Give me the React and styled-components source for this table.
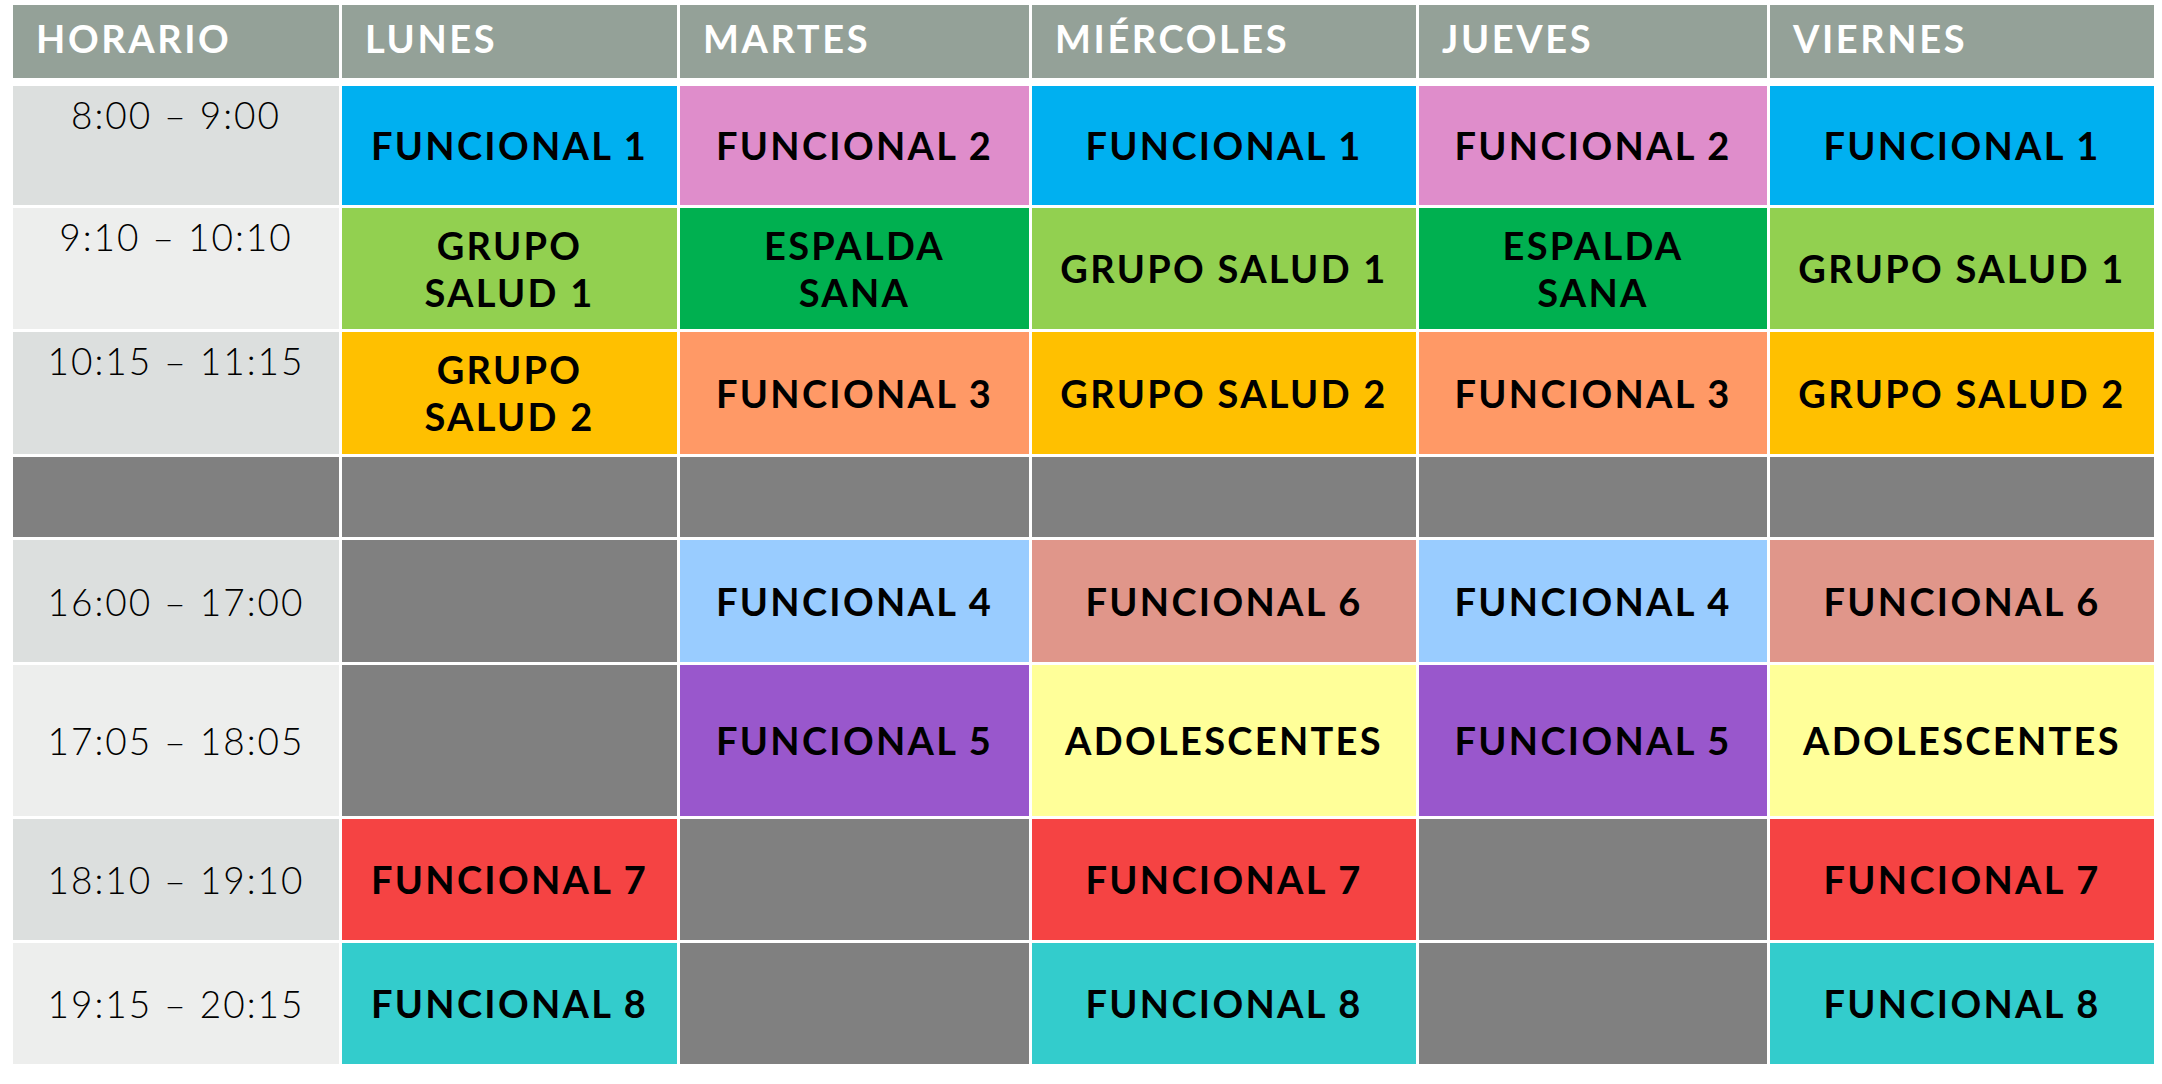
import React from 'react';
import styled, { createGlobalStyle } from 'styled-components';

const GlobalStyle = createGlobalStyle`
  html, body {
    margin: 0;
    padding: 0;
    background: #ffffff;
  }
`;

const COLUMNS = '326px 335px 349px 384px 348px 384px';

const Page = styled.div`
  padding: 5px 0 0 13px;
  font-family: Lato, "Open Sans", sans-serif;
`;

const HeaderRow = styled.div`
  display: grid;
  grid-template-columns: ${COLUMNS};
  column-gap: 3px;
  height: 73px;
  margin-bottom: 8px;
`;

const HeaderCell = styled.div`
  background: #94a198;
  color: #ffffff;
  font-weight: 700;
  font-size: 38px;
  letter-spacing: 2.6px;
  display: flex;
  align-items: center;
  padding: 0 0 7px 23px;
`;

const Body = styled.div`
  display: grid;
  grid-template-columns: ${COLUMNS};
  grid-template-rows: 119px 121px 122px 80px 122px 151px 121px 121px;
  column-gap: 3px;
  row-gap: 3px;
`;

const TimeCell = styled.div`
  background: ${p => (p.$shade ? '#dcdfde' : '#edeeed')};
  color: #000000;
  font-size: 37px;
  font-weight: 300;
  letter-spacing: 2px;
  display: flex;
  justify-content: center;
  align-items: ${p => (p.$top ? 'flex-start' : 'center')};
  padding-top: ${p => (p.$top ? '6px' : '0')};
`;

const ClassCell = styled.div`
  background: ${p => p.$bg};
  color: #000000;
  font-weight: 700;
  font-size: 38px;
  letter-spacing: 2.3px;
  line-height: 47px;
  text-align: center;
  white-space: pre-line;
  display: flex;
  align-items: center;
  justify-content: center;
`;

const Empty = styled.div`
  background: #808080;
`;

const C = {
  f1: '#00b0f0',
  f2: '#df8dcb',
  s1: '#92d050',
  es: '#00b050',
  s2: '#ffc000',
  f3: '#ff9966',
  f4: '#99ccff',
  f6: '#e0968a',
  f5: '#9957cc',
  ad: '#ffff99',
  f7: '#f54343',
  f8: '#33cccc',
};

const days = ['LUNES', 'MARTES', 'MIÉRCOLES', 'JUEVES', 'VIERNES'];

const rows = [
  { time: '8:00 – 9:00', shade: true, top: true, cells: [
    ['FUNCIONAL 1', C.f1], ['FUNCIONAL 2', C.f2], ['FUNCIONAL 1', C.f1], ['FUNCIONAL 2', C.f2], ['FUNCIONAL 1', C.f1]] },
  { time: '9:10 – 10:10', shade: false, top: true, cells: [
    ['GRUPO\nSALUD 1', C.s1], ['ESPALDA\nSANA', C.es], ['GRUPO SALUD 1', C.s1], ['ESPALDA\nSANA', C.es], ['GRUPO SALUD 1', C.s1]] },
  { time: '10:15 – 11:15', shade: true, top: true, cells: [
    ['GRUPO\nSALUD 2', C.s2], ['FUNCIONAL 3', C.f3], ['GRUPO SALUD 2', C.s2], ['FUNCIONAL 3', C.f3], ['GRUPO SALUD 2', C.s2]] },
  { time: null, cells: [null, null, null, null, null] },
  { time: '16:00 – 17:00', shade: true, cells: [
    null, ['FUNCIONAL 4', C.f4], ['FUNCIONAL 6', C.f6], ['FUNCIONAL 4', C.f4], ['FUNCIONAL 6', C.f6]] },
  { time: '17:05 – 18:05', shade: false, cells: [
    null, ['FUNCIONAL 5', C.f5], ['ADOLESCENTES', C.ad], ['FUNCIONAL 5', C.f5], ['ADOLESCENTES', C.ad]] },
  { time: '18:10 – 19:10', shade: true, cells: [
    ['FUNCIONAL 7', C.f7], null, ['FUNCIONAL 7', C.f7], null, ['FUNCIONAL 7', C.f7]] },
  { time: '19:15 – 20:15', shade: false, cells: [
    ['FUNCIONAL 8', C.f8], null, ['FUNCIONAL 8', C.f8], null, ['FUNCIONAL 8', C.f8]] },
];

export default function App() {
  return (
    <Page>
      <GlobalStyle />
      <HeaderRow>
        <HeaderCell>HORARIO</HeaderCell>
        {days.map(d => <HeaderCell key={d}>{d}</HeaderCell>)}
      </HeaderRow>
      <Body>
        {rows.map((r, i) => (
          <React.Fragment key={i}>
            {r.time
              ? <TimeCell $shade={r.shade} $top={r.top}>{r.time}</TimeCell>
              : <Empty />}
            {r.cells.map((c, j) => c
              ? <ClassCell key={j} $bg={c[1]}>{c[0]}</ClassCell>
              : <Empty key={j} />)}
          </React.Fragment>
        ))}
      </Body>
    </Page>
  );
}
